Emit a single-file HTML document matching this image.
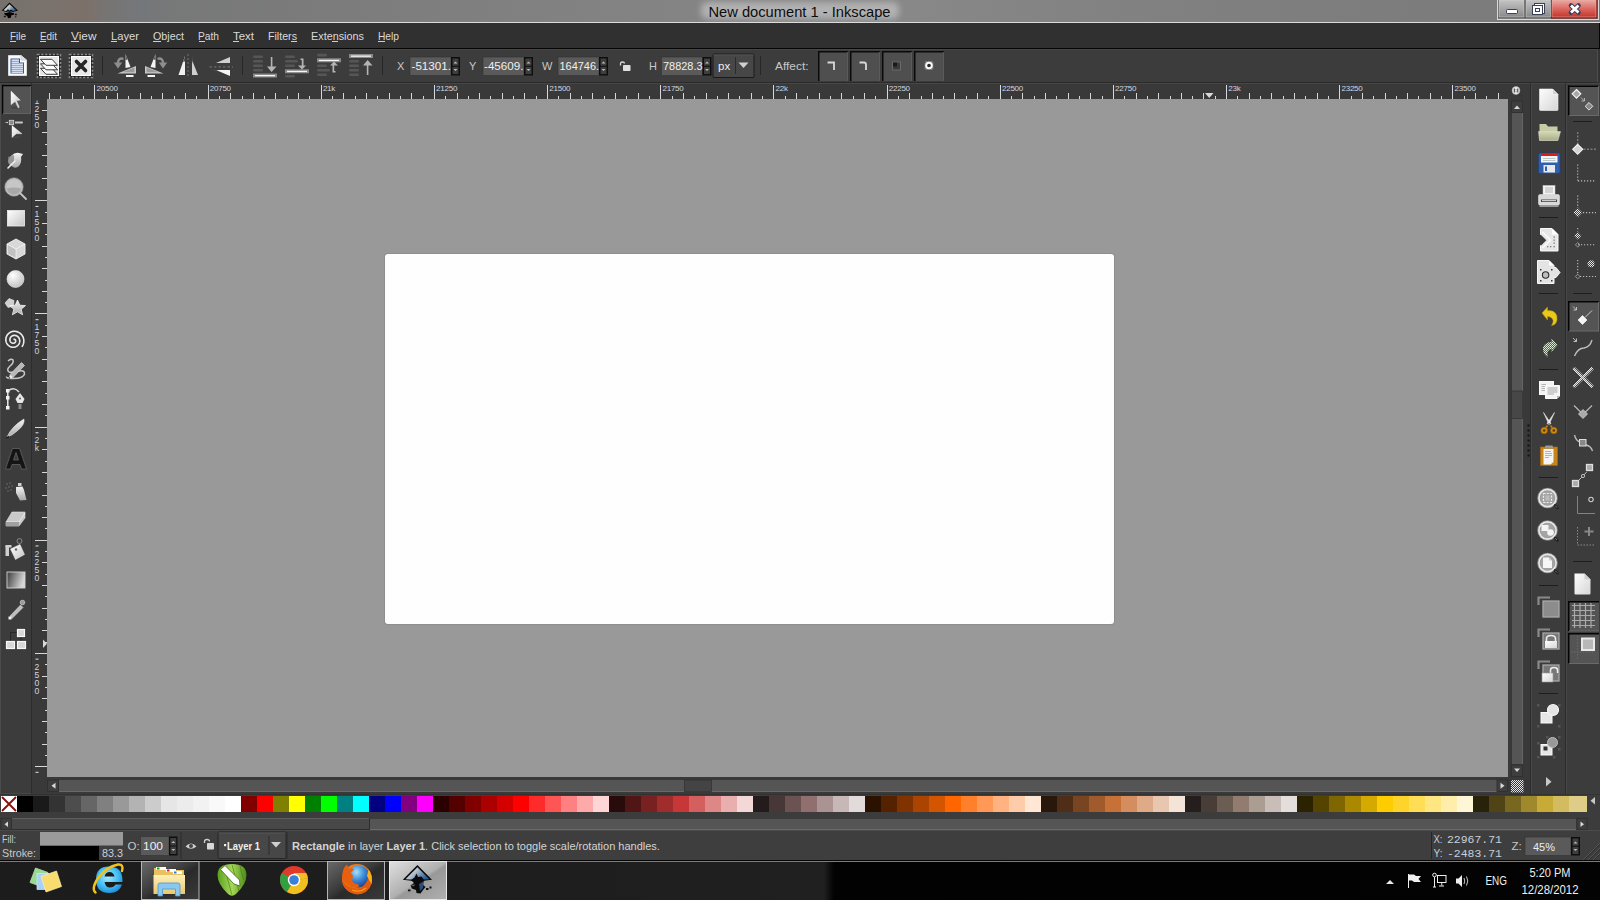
<!DOCTYPE html>
<html><head><meta charset="utf-8">
<style>
*{margin:0;padding:0;box-sizing:border-box}
html,body{width:1600px;height:900px;overflow:hidden;background:#3a3a3a;font-family:"Liberation Sans",sans-serif}
.a{position:absolute}
svg{position:absolute;left:0;top:0}
svg text{font-family:"Liberation Sans",sans-serif}
</style></head><body>
<div class="a" style="left:0;top:0;width:1600px;height:22px;background:linear-gradient(90deg,#77716c 0px,#7a736d 50px,#7c7169 85px,#767574 110px,#74777b 140px,#777878 170px,#7b7b7b 300px,#808080 500px,#848484 690px,#888888 910px,#828282 1100px,#7e7e7e 1300px,#7a7a7a 1600px)"></div>
<div class="a" style="left:0;top:0;width:1600px;height:22px;overflow:hidden"><div class="a" style="left:701px;top:2px;width:198px;height:17px;background:#b2b2b2;border-radius:6px;filter:blur(3px)"></div></div>
<div class="a" style="left:0;top:22px;width:1600px;height:1px;background:#dcdcdc"></div>
<div class="a" style="left:0;top:23px;width:1600px;height:25px;background:#303030"></div>
<div class="a" style="left:0;top:48px;width:1600px;height:1px;background:#050505"></div>
<div class="a" style="left:0;top:49px;width:1600px;height:33px;background:#3c3c3c;border-top:1px solid #474747"></div>
<div class="a" style="left:0;top:82px;width:1600px;height:1px;background:#2a2a2a"></div>
<div class="a" style="left:0;top:83px;width:1600px;height:712px;background:#3c3c3c;border-top:1px solid #474747"></div>
<div class="a" style="left:31px;top:83px;width:1px;height:712px;background:#2c2c2c"></div>
<div class="a" style="left:32px;top:84px;width:1498px;height:15px;background:#393939"></div>
<div class="a" style="left:32px;top:84px;width:15px;height:711px;background:#393939"></div>
<div class="a" style="left:47px;top:99px;width:1461px;height:678px;background:#999999"></div>
<div class="a" style="left:385px;top:254px;width:729px;height:370px;background:#fefefe;border-radius:3px;box-shadow:0 0 0 1px #8e8e8e"></div>
<div class="a" style="left:1508px;top:99px;width:22px;height:696px;background:#393939"></div>
<div class="a" style="left:47px;top:777px;width:1461px;height:18px;background:#393939"></div>
<div class="a" style="left:1530px;top:83px;width:1px;height:712px;background:#2c2c2c"></div>
<div class="a" style="left:1531px;top:84px;width:1px;height:711px;background:#474747"></div>
<div class="a" style="left:1565px;top:83px;width:1px;height:712px;background:#2c2c2c"></div>
<div class="a" style="left:1566px;top:84px;width:1px;height:711px;background:#474747"></div>
<div class="a" style="left:0;top:795px;width:1600px;height:35px;background:#3c3c3c"></div>
<div class="a" style="left:0;top:830px;width:1600px;height:31px;background:#3e3e3e;border-top:1px solid #4a4a4a"></div>
<div class="a" style="left:0;top:860px;width:1600px;height:1px;background:#050505"></div>
<div class="a" style="left:0;top:861px;width:1600px;height:1px;background:#7c7c7c"></div>
<div class="a" style="left:0;top:862px;width:1600px;height:38px;background:linear-gradient(90deg,#1c1c1c 0px,#1e1e1e 600px,#202020 824px,#020202 834px,#030303 1600px)"></div>
<div class="a" style="left:1599px;top:23px;width:1px;height:25px;background:#050505"></div>
<div class="a" style="left:1597px;top:50px;width:1px;height:32px;background:#4e4e4e"></div>
<div class="a" style="left:1598px;top:49px;width:2px;height:34px;background:#333"></div>
<div class="a" style="left:0;top:84px;width:1px;height:710px;background:#4c4c4c"></div>
<div class="a" style="left:0;top:793px;width:31px;height:1px;background:#484848"></div>
<div class="a" style="left:0;top:794px;width:1600px;height:1px;background:#333"></div>

<svg width="1600" height="900" viewBox="0 0 1600 900">

<g id="title">
<!-- inkscape logo small -->
<defs><linearGradient id="inkg2" x1="0" y1="0" x2="1" y2="0.5"><stop offset="0" stop-color="#ffffff"/><stop offset="0.5" stop-color="#b8c4d0"/><stop offset="1" stop-color="#2a5a98"/></linearGradient></defs>
<path d="M9.5 2.6L18 10.5L9.5 13L1.8 10.5Z" fill="#0a0a0a"/>
<path d="M9.5 4.3L16.2 10.3L9.5 12L3.6 10.3Z" fill="url(#inkg2)"/>
<path d="M6 10.5L8 9.2L9.5 10.5L11 9.5L13 10.8L9.5 12Z" fill="#151515"/>
<path d="M4.2 13L14 13L13.8 14.8L11.3 15.2L10.8 17.8L8 18.2L7.3 16L4.8 14.8Z" fill="#000"/>
<rect x="3.8" y="15.8" width="2" height="1.4" fill="#111"/><rect x="14.8" y="13.8" width="2" height="1.4" fill="#111"/><rect x="15" y="16.2" width="1.3" height="1.2" fill="#222"/>
<text x="708.5" y="17" font-size="15" fill="#0c0c10" textLength="182" lengthAdjust="spacingAndGlyphs">New document 1 - Inkscape</text>
<!-- caption buttons -->
<rect x="1497.5" y="-1" width="101" height="20.5" fill="none" stroke="#d8d8d8" stroke-width="1"/>
<defs>
<linearGradient id="capg" x1="0" y1="0" x2="0" y2="1"><stop offset="0" stop-color="#c4c4c4"/><stop offset="1" stop-color="#8a8a8a"/></linearGradient>
<linearGradient id="capr" x1="0" y1="0" x2="0" y2="1"><stop offset="0" stop-color="#eaaaa6"/><stop offset="0.5" stop-color="#dc6a62"/><stop offset="1" stop-color="#c4362c"/></linearGradient>
</defs>
<rect x="1498" y="0" width="27" height="18" fill="#505050"/>
<rect x="1499" y="0" width="25" height="17" fill="url(#capg)" stroke="#d0d0d0" stroke-width="0.6"/>
<rect x="1525" y="0" width="26" height="18" fill="#505050"/>
<rect x="1526" y="0" width="24.5" height="17" fill="url(#capg)" stroke="#d0d0d0" stroke-width="0.6"/>
<rect x="1551" y="0" width="46.5" height="18.5" fill="#7a1410"/>
<rect x="1552" y="0" width="44" height="17" fill="url(#capr)" stroke="#eeb0a8" stroke-width="0.6"/>
<rect x="1506.5" y="9.5" width="11" height="4" rx="0.8" fill="#fff" stroke="#3a3f58" stroke-width="1"/>
<rect x="1534.5" y="3.5" width="10" height="10" fill="#fff" stroke="#3a3f58" stroke-width="1"/>
<rect x="1532.5" y="5.5" width="10" height="9" fill="#fff" stroke="#3a3f58" stroke-width="1"/>
<rect x="1535" y="8" width="5" height="4" fill="#3a3f58"/><rect x="1536" y="9" width="3" height="2" fill="#fff"/>
<path d="M1571 5.5L1578.5 12.5M1578.5 5.5L1571 12.5" stroke="#3a3f58" stroke-width="4.6" stroke-linecap="round"/>
<path d="M1571 5.5L1578.5 12.5M1578.5 5.5L1571 12.5" stroke="#fff" stroke-width="2.8" stroke-linecap="butt"/>
</g>

<g font-size="11" fill="#dadada">
<text x="10" y="40" textLength="16" lengthAdjust="spacingAndGlyphs">File</text>
<text x="40" y="40" textLength="17" lengthAdjust="spacingAndGlyphs">Edit</text>
<text x="71" y="40" textLength="25.5" lengthAdjust="spacingAndGlyphs">View</text>
<text x="111" y="40" textLength="28" lengthAdjust="spacingAndGlyphs">Layer</text>
<text x="153" y="40" textLength="31" lengthAdjust="spacingAndGlyphs">Object</text>
<text x="198" y="40" textLength="21" lengthAdjust="spacingAndGlyphs">Path</text>
<text x="233" y="40" textLength="21" lengthAdjust="spacingAndGlyphs">Text</text>
<text x="268" y="40" textLength="29" lengthAdjust="spacingAndGlyphs">Filters</text>
<text x="311" y="40" textLength="53" lengthAdjust="spacingAndGlyphs">Extensions</text>
<text x="378" y="40" textLength="21" lengthAdjust="spacingAndGlyphs">Help</text>
</g>
<g fill="#cfcfcf">
<rect x="10" y="41" width="6" height="1"/><rect x="40" y="41" width="6" height="1"/><rect x="71" y="41" width="8" height="1"/>
<rect x="111" y="41" width="6" height="1"/><rect x="153" y="41" width="8" height="1"/><rect x="199" y="41" width="6" height="1"/>
<rect x="233" y="41" width="6" height="1"/><rect x="291" y="41" width="6" height="1"/><rect x="332" y="41" width="6" height="1"/>
<rect x="378" y="41" width="7" height="1"/>
</g>

<g id="toolbar">
<!-- select all -->
<path d="M8.5 55.5H21L26.5 60V75.5H8.5Z" fill="#fbfbfb" stroke="#d8d8d8" stroke-width="1" stroke-linejoin="round"/>
<path d="M21 55.5V60H26.5" fill="#e0e0dc" stroke="#c8c8c4" stroke-width="0.8"/>
<rect x="10.5" y="58.5" width="9.5" height="15" fill="#2c5aa8"/><rect x="20" y="62.5" width="4" height="11" fill="#2c5aa8"/>
<g fill="#fff"><rect x="11.5" y="59.5" width="7.5" height="1.3"/><rect x="11.5" y="61.5" width="7.5" height="1.3"/><rect x="11.5" y="63.5" width="11.5" height="1.3"/><rect x="11.5" y="65.5" width="11.5" height="1.3"/><rect x="11.5" y="67.5" width="11.5" height="1.3"/><rect x="11.5" y="69.5" width="11.5" height="1.3"/><rect x="11.5" y="71.5" width="11.5" height="1.3"/></g>
<!-- select all in all layers -->
<rect x="37.5" y="54.5" width="23" height="23" fill="#1e1e1e"/>
<rect x="37.5" y="54.5" width="23" height="23" fill="none" stroke="#8a8a8a" stroke-width="1.6" stroke-dasharray="2.2 1.6"/>
<rect x="39" y="56" width="20" height="20" fill="#fff"/>
<rect x="40" y="57" width="18" height="18" fill="#e6e6e6"/>
<g fill="#fafafa" stroke="#3a3a3a" stroke-width="1" stroke-linejoin="round">
<path d="M40.5 68.3H52L57.5 74.3H46Z"/><path d="M40.5 63.8H52L57.5 69.8H46Z"/><path d="M40.5 59.3H52L57.5 65.3H46Z"/>
</g>
<!-- deselect -->
<rect x="69.5" y="54.5" width="23" height="23" fill="#1e1e1e"/>
<rect x="69.5" y="54.5" width="23" height="23" fill="none" stroke="#8a8a8a" stroke-width="1.6" stroke-dasharray="2.2 1.6"/>
<rect x="71" y="56" width="20" height="20" fill="#fff"/>
<rect x="72" y="57" width="18" height="18" fill="#e8e8e8"/>
<path d="M76.5 61.5L85.5 70.5M85.5 61.5L76.5 70.5" stroke="#262626" stroke-width="3.6" stroke-linecap="round"/>
<!-- separators -->
<g fill="#262626"><rect x="102" y="56" width="1" height="19"/><rect x="242" y="56" width="1" height="19"/><rect x="382" y="56" width="1" height="19"/><rect x="760" y="56" width="1" height="19"/></g>
<!-- rotate ccw -->
<g>
<path d="M123.5 58.8Q118 57.5 118 63" fill="none" stroke="#8e8e8e" stroke-width="2.4"/><path d="M113.8 62.5H122.2L118 68.5Z" fill="#8e8e8e"/>
<path d="M125.5 54L130.5 67L125.5 68Z" fill="#f4f4f4"/><path d="M125.5 54L127.6 59.5L125.5 60Z" fill="#555"/>
<path d="M117.5 73.5L136 66V73.5Z" fill="#c8c8c8"/><path d="M122.5 72.2L134.5 67.5V72.2Z" fill="#999"/>
<rect x="126" y="75" width="7.5" height="2" fill="#f4f4f4"/>
</g>
<g transform="translate(281,0) scale(-1,1)">
<path d="M123.5 58.8Q118 57.5 118 63" fill="none" stroke="#8e8e8e" stroke-width="2.4"/><path d="M113.8 62.5H122.2L118 68.5Z" fill="#8e8e8e"/>
<path d="M125.5 54L130.5 67L125.5 68Z" fill="#f4f4f4"/><path d="M125.5 54L127.6 59.5L125.5 60Z" fill="#555"/>
<path d="M117.5 73.5L136 66V73.5Z" fill="#c8c8c8"/><path d="M122.5 72.2L134.5 67.5V72.2Z" fill="#999"/>
<rect x="126" y="75" width="7.5" height="2" fill="#f4f4f4"/>
</g>
<!-- flip h -->
<path d="M178.5 75L185 56V75Z" fill="#f2f2f2"/><path d="M183 62L185 56V61.5Z" fill="#555"/>
<path d="M192 60V75H198Z" fill="#cfcfcf"/><path d="M192 56V60.5L193.5 64.5Z" fill="#555"/>
<path d="M188 54V77" stroke="#6a6a6a" stroke-width="1.2" stroke-dasharray="2 2"/>
<!-- flip v -->
<path d="M216 63L230 57V63Z" fill="#cfcfcf"/>
<path d="M216 70H230V76Z" fill="#f4f4f4"/><path d="M210.5 69.5L216 70L219 71.5Z" fill="#555"/>
<path d="M209.5 66.8H233" stroke="#6a6a6a" stroke-width="1.2" stroke-dasharray="2.5 2"/>
<!-- lower to bottom -->
<g fill="#565656"><rect x="253" y="55.5" width="10" height="2.6" rx="1.3"/><rect x="253" y="60" width="10" height="2.6" rx="1.3"/><rect x="253" y="64.5" width="10" height="2.6" rx="1.3"/><rect x="253" y="69" width="10" height="2.6" rx="1.3"/>
<rect x="285" y="55.5" width="10" height="2.6" rx="1.3"/><rect x="285" y="60" width="13" height="2.6" rx="1.3"/><rect x="285" y="64.5" width="10" height="2.6" rx="1.3"/><rect x="285" y="75" width="10" height="2.6" rx="1.3"/>
<rect x="317" y="53.8" width="10" height="2.6" rx="1.3"/><rect x="317" y="64.5" width="10" height="2.6" rx="1.3"/><rect x="317" y="69" width="13" height="2.6" rx="1.3"/><rect x="317" y="73.5" width="10" height="2.6" rx="1.3"/>
<rect x="349" y="60" width="10" height="2.6" rx="1.3"/><rect x="349" y="64.5" width="10" height="2.6" rx="1.3"/><rect x="349" y="69" width="10" height="2.6" rx="1.3"/><rect x="349" y="73.5" width="10" height="2.6" rx="1.3"/></g>
<g fill="#8a8a8a"><rect x="253" y="73.5" width="24" height="4"/><rect x="285" y="69.3" width="24" height="4"/><rect x="317" y="58.3" width="24" height="4"/><rect x="349" y="54" width="24" height="4"/></g>
<g fill="#f6f6f6"><rect x="255" y="75" width="20" height="1.3"/><rect x="287" y="70.8" width="20" height="1.3"/><rect x="319" y="59.8" width="20" height="1.3"/><rect x="351" y="55.5" width="20" height="1.3"/></g>
<g fill="#b4b4b4">
<rect x="270.8" y="57" width="1.6" height="10"/><path d="M267 66.5H276.5L271.6 72Z"/>
<path d="M300.5 58.5H303.5V65.5H306L302 69.5L298 65.5H301.8V60H300.5Z"/>
<path d="M335.5 72.5H332.5V65.5H330L334 61.5L338 65.5H334.2V71H335.5Z"/>
<rect x="366.8" y="64" width="1.6" height="11"/><path d="M363 65.5H372.5L367.6 60Z"/>
</g>
<!-- X Y W H -->
<g font-size="11" fill="#c8c8c8">
<text x="397" y="70">X</text><text x="469" y="70">Y</text><text x="542" y="70">W</text><text x="649" y="70">H</text>
<text x="775" y="70" textLength="33.5" lengthAdjust="spacingAndGlyphs">Affect:</text>
</g>
<g>
<rect x="410" y="57" width="41" height="18.5" fill="#5a5a5a" stroke="#333" stroke-width="0.6"/>
<rect x="483" y="57" width="41" height="18.5" fill="#5a5a5a" stroke="#333" stroke-width="0.6"/>
<rect x="558" y="57" width="41" height="18.5" fill="#5a5a5a" stroke="#333" stroke-width="0.6"/>
<rect x="661.5" y="57" width="41" height="18.5" fill="#5a5a5a" stroke="#333" stroke-width="0.6"/>
</g>
<g fill="#0e0e0e"><rect x="451" y="57" width="9" height="18.5"/><rect x="524" y="57" width="9" height="18.5"/><rect x="599" y="57" width="9" height="18.5"/><rect x="702.5" y="57" width="9" height="18.5"/></g>
<g fill="#3e3e3e"><rect x="452.5" y="58.5" width="6" height="7.3"/><rect x="452.5" y="66.8" width="6" height="7.3"/>
<rect x="525.5" y="58.5" width="6" height="7.3"/><rect x="525.5" y="66.8" width="6" height="7.3"/>
<rect x="600.5" y="58.5" width="6" height="7.3"/><rect x="600.5" y="66.8" width="6" height="7.3"/>
<rect x="704" y="58.5" width="6" height="7.3"/><rect x="704" y="66.8" width="6" height="7.3"/></g>
<g fill="#bbb">
<path d="M453.5 63.5H457.5L455.5 61.5Z"/><path d="M453.5 69H457.5L455.5 71Z"/>
<path d="M526.5 63.5H530.5L528.5 61.5Z"/><path d="M526.5 69H530.5L528.5 71Z"/>
<path d="M601.5 63.5H605.5L603.5 61.5Z"/><path d="M601.5 69H605.5L603.5 71Z"/>
<path d="M705 63.5H709L707 61.5Z"/><path d="M705 69H709L707 71Z"/>
</g>
<g font-size="11.5" fill="#f0f0f0">
<text x="411.5" y="69.6" textLength="39.5" lengthAdjust="spacingAndGlyphs">-51301.</text>
<text x="484" y="69.6" textLength="39.5" lengthAdjust="spacingAndGlyphs">-45609.</text>
<text x="559.5" y="69.6" textLength="39.5" lengthAdjust="spacingAndGlyphs">164746.</text>
<text x="663" y="69.6" textLength="39.5" lengthAdjust="spacingAndGlyphs">78828.3</text>
</g>
<!-- lock -->
<path d="M620.5 65.5V63.5C620.5 61.5 624.5 61.5 624.5 63.5" fill="none" stroke="#d8d8d8" stroke-width="1.3"/>
<rect x="623" y="65" width="7.5" height="6" rx="0.8" fill="#e0e0e0"/>
<!-- px combo -->
<rect x="713" y="54" width="41" height="23.5" rx="1" fill="#474747" stroke="#1a1a1a" stroke-width="1"/>
<rect x="713.5" y="54.5" width="40" height="1" fill="#555"/>
<text x="718" y="69.8" font-size="11.5" fill="#f0f0f0">px</text>
<rect x="735" y="57" width="1" height="17" fill="#2c2c2c"/>
<path d="M738.5 62.5H748.5L743.5 68Z" fill="#d0d0d0"/>
<!-- affect buttons -->
<g>
<rect x="818" y="51" width="30" height="30" fill="#4f4f4f"/><rect x="818" y="51" width="30" height="1.5" fill="#0a0a0a"/><rect x="818" y="51" width="1.5" height="30" fill="#0a0a0a"/>
<rect x="850" y="51" width="30" height="30" fill="#4f4f4f"/><rect x="850" y="51" width="30" height="1.5" fill="#0a0a0a"/><rect x="850" y="51" width="1.5" height="30" fill="#0a0a0a"/>
<rect x="882" y="51" width="30" height="30" fill="#4f4f4f"/><rect x="882" y="51" width="30" height="1.5" fill="#0a0a0a"/><rect x="882" y="51" width="1.5" height="30" fill="#0a0a0a"/>
<rect x="914" y="51" width="30" height="30" fill="#4f4f4f"/><rect x="914" y="51" width="30" height="1.5" fill="#0a0a0a"/><rect x="914" y="51" width="1.5" height="30" fill="#0a0a0a"/>
</g>
<g fill="#5a5a5a"><rect x="847" y="52" width="1" height="29"/><rect x="879" y="52" width="1" height="29"/><rect x="911" y="52" width="1" height="29"/><rect x="943" y="52" width="1" height="29"/></g>
<path d="M827.5 62.5H834V70" fill="none" stroke="#d8d8d8" stroke-width="1.8"/>
<path d="M859.5 62.5H864Q866 62.5 866 64.5V70" fill="none" stroke="#d8d8d8" stroke-width="1.8"/>
<rect x="892" y="61.5" width="9" height="9" fill="#6a6a6a"/><rect x="893" y="62.5" width="7" height="7" fill="#3a3a3a"/><rect x="893" y="62.5" width="4" height="4" fill="#1a1a1a"/>
<rect x="924.5" y="61" width="9" height="9" rx="2" fill="#777"/>
<circle cx="929" cy="65.5" r="3.8" fill="#fafafa"/><circle cx="929" cy="65.5" r="1.8" fill="#2a2a2a"/>
</g>

<g stroke="#d8d8d8" stroke-width="1"><line x1="49.5" y1="93" x2="49.5" y2="99"/><line x1="60.5" y1="96" x2="60.5" y2="99"/><line x1="72.5" y1="93" x2="72.5" y2="99"/><line x1="83.5" y1="96" x2="83.5" y2="99"/><line x1="94.5" y1="85" x2="94.5" y2="99"/><line x1="106.5" y1="96" x2="106.5" y2="99"/><line x1="117.5" y1="93" x2="117.5" y2="99"/><line x1="128.5" y1="96" x2="128.5" y2="99"/><line x1="140.5" y1="93" x2="140.5" y2="99"/><line x1="151.5" y1="96" x2="151.5" y2="99"/><line x1="162.5" y1="93" x2="162.5" y2="99"/><line x1="174.5" y1="96" x2="174.5" y2="99"/><line x1="185.5" y1="93" x2="185.5" y2="99"/><line x1="196.5" y1="96" x2="196.5" y2="99"/><line x1="208.5" y1="85" x2="208.5" y2="99"/><line x1="219.5" y1="96" x2="219.5" y2="99"/><line x1="230.5" y1="93" x2="230.5" y2="99"/><line x1="242.5" y1="96" x2="242.5" y2="99"/><line x1="253.5" y1="93" x2="253.5" y2="99"/><line x1="264.5" y1="96" x2="264.5" y2="99"/><line x1="275.5" y1="93" x2="275.5" y2="99"/><line x1="287.5" y1="96" x2="287.5" y2="99"/><line x1="298.5" y1="93" x2="298.5" y2="99"/><line x1="309.5" y1="96" x2="309.5" y2="99"/><line x1="321.5" y1="85" x2="321.5" y2="99"/><line x1="332.5" y1="96" x2="332.5" y2="99"/><line x1="343.5" y1="93" x2="343.5" y2="99"/><line x1="355.5" y1="96" x2="355.5" y2="99"/><line x1="366.5" y1="93" x2="366.5" y2="99"/><line x1="377.5" y1="96" x2="377.5" y2="99"/><line x1="389.5" y1="93" x2="389.5" y2="99"/><line x1="400.5" y1="96" x2="400.5" y2="99"/><line x1="411.5" y1="93" x2="411.5" y2="99"/><line x1="423.5" y1="96" x2="423.5" y2="99"/><line x1="434.5" y1="85" x2="434.5" y2="99"/><line x1="445.5" y1="96" x2="445.5" y2="99"/><line x1="457.5" y1="93" x2="457.5" y2="99"/><line x1="468.5" y1="96" x2="468.5" y2="99"/><line x1="479.5" y1="93" x2="479.5" y2="99"/><line x1="490.5" y1="96" x2="490.5" y2="99"/><line x1="502.5" y1="93" x2="502.5" y2="99"/><line x1="513.5" y1="96" x2="513.5" y2="99"/><line x1="524.5" y1="93" x2="524.5" y2="99"/><line x1="536.5" y1="96" x2="536.5" y2="99"/><line x1="547.5" y1="85" x2="547.5" y2="99"/><line x1="558.5" y1="96" x2="558.5" y2="99"/><line x1="570.5" y1="93" x2="570.5" y2="99"/><line x1="581.5" y1="96" x2="581.5" y2="99"/><line x1="592.5" y1="93" x2="592.5" y2="99"/><line x1="604.5" y1="96" x2="604.5" y2="99"/><line x1="615.5" y1="93" x2="615.5" y2="99"/><line x1="626.5" y1="96" x2="626.5" y2="99"/><line x1="638.5" y1="93" x2="638.5" y2="99"/><line x1="649.5" y1="96" x2="649.5" y2="99"/><line x1="660.5" y1="85" x2="660.5" y2="99"/><line x1="672.5" y1="96" x2="672.5" y2="99"/><line x1="683.5" y1="93" x2="683.5" y2="99"/><line x1="694.5" y1="96" x2="694.5" y2="99"/><line x1="706.5" y1="93" x2="706.5" y2="99"/><line x1="717.5" y1="96" x2="717.5" y2="99"/><line x1="728.5" y1="93" x2="728.5" y2="99"/><line x1="739.5" y1="96" x2="739.5" y2="99"/><line x1="751.5" y1="93" x2="751.5" y2="99"/><line x1="762.5" y1="96" x2="762.5" y2="99"/><line x1="773.5" y1="85" x2="773.5" y2="99"/><line x1="785.5" y1="96" x2="785.5" y2="99"/><line x1="796.5" y1="93" x2="796.5" y2="99"/><line x1="807.5" y1="96" x2="807.5" y2="99"/><line x1="819.5" y1="93" x2="819.5" y2="99"/><line x1="830.5" y1="96" x2="830.5" y2="99"/><line x1="841.5" y1="93" x2="841.5" y2="99"/><line x1="853.5" y1="96" x2="853.5" y2="99"/><line x1="864.5" y1="93" x2="864.5" y2="99"/><line x1="875.5" y1="96" x2="875.5" y2="99"/><line x1="887.5" y1="85" x2="887.5" y2="99"/><line x1="898.5" y1="96" x2="898.5" y2="99"/><line x1="909.5" y1="93" x2="909.5" y2="99"/><line x1="921.5" y1="96" x2="921.5" y2="99"/><line x1="932.5" y1="93" x2="932.5" y2="99"/><line x1="943.5" y1="96" x2="943.5" y2="99"/><line x1="954.5" y1="93" x2="954.5" y2="99"/><line x1="966.5" y1="96" x2="966.5" y2="99"/><line x1="977.5" y1="93" x2="977.5" y2="99"/><line x1="988.5" y1="96" x2="988.5" y2="99"/><line x1="1000.5" y1="85" x2="1000.5" y2="99"/><line x1="1011.5" y1="96" x2="1011.5" y2="99"/><line x1="1022.5" y1="93" x2="1022.5" y2="99"/><line x1="1034.5" y1="96" x2="1034.5" y2="99"/><line x1="1045.5" y1="93" x2="1045.5" y2="99"/><line x1="1056.5" y1="96" x2="1056.5" y2="99"/><line x1="1068.5" y1="93" x2="1068.5" y2="99"/><line x1="1079.5" y1="96" x2="1079.5" y2="99"/><line x1="1090.5" y1="93" x2="1090.5" y2="99"/><line x1="1102.5" y1="96" x2="1102.5" y2="99"/><line x1="1113.5" y1="85" x2="1113.5" y2="99"/><line x1="1124.5" y1="96" x2="1124.5" y2="99"/><line x1="1136.5" y1="93" x2="1136.5" y2="99"/><line x1="1147.5" y1="96" x2="1147.5" y2="99"/><line x1="1158.5" y1="93" x2="1158.5" y2="99"/><line x1="1170.5" y1="96" x2="1170.5" y2="99"/><line x1="1181.5" y1="93" x2="1181.5" y2="99"/><line x1="1192.5" y1="96" x2="1192.5" y2="99"/><line x1="1203.5" y1="93" x2="1203.5" y2="99"/><line x1="1215.5" y1="96" x2="1215.5" y2="99"/><line x1="1226.5" y1="85" x2="1226.5" y2="99"/><line x1="1237.5" y1="96" x2="1237.5" y2="99"/><line x1="1249.5" y1="93" x2="1249.5" y2="99"/><line x1="1260.5" y1="96" x2="1260.5" y2="99"/><line x1="1271.5" y1="93" x2="1271.5" y2="99"/><line x1="1283.5" y1="96" x2="1283.5" y2="99"/><line x1="1294.5" y1="93" x2="1294.5" y2="99"/><line x1="1305.5" y1="96" x2="1305.5" y2="99"/><line x1="1317.5" y1="93" x2="1317.5" y2="99"/><line x1="1328.5" y1="96" x2="1328.5" y2="99"/><line x1="1339.5" y1="85" x2="1339.5" y2="99"/><line x1="1351.5" y1="96" x2="1351.5" y2="99"/><line x1="1362.5" y1="93" x2="1362.5" y2="99"/><line x1="1373.5" y1="96" x2="1373.5" y2="99"/><line x1="1385.5" y1="93" x2="1385.5" y2="99"/><line x1="1396.5" y1="96" x2="1396.5" y2="99"/><line x1="1407.5" y1="93" x2="1407.5" y2="99"/><line x1="1418.5" y1="96" x2="1418.5" y2="99"/><line x1="1430.5" y1="93" x2="1430.5" y2="99"/><line x1="1441.5" y1="96" x2="1441.5" y2="99"/><line x1="1452.5" y1="85" x2="1452.5" y2="99"/><line x1="1464.5" y1="96" x2="1464.5" y2="99"/><line x1="1475.5" y1="93" x2="1475.5" y2="99"/><line x1="1486.5" y1="96" x2="1486.5" y2="99"/><line x1="1498.5" y1="93" x2="1498.5" y2="99"/></g><g fill="#cfd6e0" font-size="8" letter-spacing="-0.25"><text x="96.6" y="91">20500</text><text x="209.8" y="91">20750</text><text x="322.9" y="91">21k</text><text x="436.1" y="91">21250</text><text x="549.3" y="91">21500</text><text x="662.5" y="91">21750</text><text x="775.6" y="91">22k</text><text x="888.8" y="91">22250</text><text x="1002.0" y="91">22500</text><text x="1115.1" y="91">22750</text><text x="1228.3" y="91">23k</text><text x="1341.5" y="91">23250</text><text x="1454.6" y="91">23500</text></g>
<defs><clipPath id="vrc"><rect x="32" y="100.5" width="15" height="675"/></clipPath></defs><g stroke="#d8d8d8" stroke-width="1"><line x1="42" y1="110.5" x2="47" y2="110.5"/><line x1="45" y1="121.5" x2="47" y2="121.5"/><line x1="42" y1="132.5" x2="47" y2="132.5"/><line x1="45" y1="144.5" x2="47" y2="144.5"/><line x1="42" y1="155.5" x2="47" y2="155.5"/><line x1="45" y1="166.5" x2="47" y2="166.5"/><line x1="42" y1="178.5" x2="47" y2="178.5"/><line x1="45" y1="189.5" x2="47" y2="189.5"/><line x1="35" y1="200.5" x2="47" y2="200.5"/><line x1="45" y1="212.5" x2="47" y2="212.5"/><line x1="42" y1="223.5" x2="47" y2="223.5"/><line x1="45" y1="234.5" x2="47" y2="234.5"/><line x1="42" y1="246.5" x2="47" y2="246.5"/><line x1="45" y1="257.5" x2="47" y2="257.5"/><line x1="42" y1="268.5" x2="47" y2="268.5"/><line x1="45" y1="280.5" x2="47" y2="280.5"/><line x1="42" y1="291.5" x2="47" y2="291.5"/><line x1="45" y1="302.5" x2="47" y2="302.5"/><line x1="35" y1="313.5" x2="47" y2="313.5"/><line x1="45" y1="325.5" x2="47" y2="325.5"/><line x1="42" y1="336.5" x2="47" y2="336.5"/><line x1="45" y1="347.5" x2="47" y2="347.5"/><line x1="42" y1="359.5" x2="47" y2="359.5"/><line x1="45" y1="370.5" x2="47" y2="370.5"/><line x1="42" y1="381.5" x2="47" y2="381.5"/><line x1="45" y1="393.5" x2="47" y2="393.5"/><line x1="42" y1="404.5" x2="47" y2="404.5"/><line x1="45" y1="415.5" x2="47" y2="415.5"/><line x1="35" y1="427.5" x2="47" y2="427.5"/><line x1="45" y1="438.5" x2="47" y2="438.5"/><line x1="42" y1="449.5" x2="47" y2="449.5"/><line x1="45" y1="461.5" x2="47" y2="461.5"/><line x1="42" y1="472.5" x2="47" y2="472.5"/><line x1="45" y1="483.5" x2="47" y2="483.5"/><line x1="42" y1="495.5" x2="47" y2="495.5"/><line x1="45" y1="506.5" x2="47" y2="506.5"/><line x1="42" y1="517.5" x2="47" y2="517.5"/><line x1="45" y1="528.5" x2="47" y2="528.5"/><line x1="35" y1="540.5" x2="47" y2="540.5"/><line x1="45" y1="551.5" x2="47" y2="551.5"/><line x1="42" y1="562.5" x2="47" y2="562.5"/><line x1="45" y1="574.5" x2="47" y2="574.5"/><line x1="42" y1="585.5" x2="47" y2="585.5"/><line x1="45" y1="596.5" x2="47" y2="596.5"/><line x1="42" y1="608.5" x2="47" y2="608.5"/><line x1="45" y1="619.5" x2="47" y2="619.5"/><line x1="42" y1="630.5" x2="47" y2="630.5"/><line x1="45" y1="642.5" x2="47" y2="642.5"/><line x1="35" y1="653.5" x2="47" y2="653.5"/><line x1="45" y1="664.5" x2="47" y2="664.5"/><line x1="42" y1="676.5" x2="47" y2="676.5"/><line x1="45" y1="687.5" x2="47" y2="687.5"/><line x1="42" y1="698.5" x2="47" y2="698.5"/><line x1="45" y1="710.5" x2="47" y2="710.5"/><line x1="42" y1="721.5" x2="47" y2="721.5"/><line x1="45" y1="732.5" x2="47" y2="732.5"/><line x1="42" y1="744.5" x2="47" y2="744.5"/><line x1="45" y1="755.5" x2="47" y2="755.5"/><line x1="35" y1="766.5" x2="47" y2="766.5"/></g><g fill="#cfd6e0" font-size="8.6" clip-path="url(#vrc)"><rect x="35.5" y="92.7" width="3" height="1.1"/><text x="37" y="103.8" text-anchor="middle">1</text><text x="37" y="111.9" text-anchor="middle">2</text><text x="37" y="119.9" text-anchor="middle">5</text><text x="37" y="127.9" text-anchor="middle">0</text><rect x="35.5" y="205.9" width="3" height="1.1"/><text x="37" y="217.0" text-anchor="middle">1</text><text x="37" y="225.0" text-anchor="middle">5</text><text x="37" y="233.1" text-anchor="middle">0</text><text x="37" y="241.1" text-anchor="middle">0</text><rect x="35.5" y="319.1" width="3" height="1.1"/><text x="37" y="330.2" text-anchor="middle">1</text><text x="37" y="338.2" text-anchor="middle">7</text><text x="37" y="346.2" text-anchor="middle">5</text><text x="37" y="354.3" text-anchor="middle">0</text><rect x="35.5" y="432.2" width="3" height="1.1"/><text x="37" y="443.3" text-anchor="middle">2</text><text x="37" y="451.4" text-anchor="middle">k</text><rect x="35.5" y="545.4" width="3" height="1.1"/><text x="37" y="556.5" text-anchor="middle">2</text><text x="37" y="564.5" text-anchor="middle">2</text><text x="37" y="572.6" text-anchor="middle">5</text><text x="37" y="580.6" text-anchor="middle">0</text><rect x="35.5" y="658.6" width="3" height="1.1"/><text x="37" y="669.7" text-anchor="middle">2</text><text x="37" y="677.7" text-anchor="middle">5</text><text x="37" y="685.7" text-anchor="middle">0</text><text x="37" y="693.8" text-anchor="middle">0</text><rect x="35.5" y="771.8" width="3" height="1.1"/><text x="37" y="782.9" text-anchor="middle">2</text><text x="37" y="790.9" text-anchor="middle">7</text><text x="37" y="798.9" text-anchor="middle">5</text><text x="37" y="806.9" text-anchor="middle">0</text></g>
<defs>
<linearGradient id="gw" x1="0" y1="0" x2="1" y2="1"><stop offset="0" stop-color="#ffffff"/><stop offset="1" stop-color="#c4c4c4"/></linearGradient>
<linearGradient id="gw2" x1="0" y1="0" x2="0" y2="1"><stop offset="0" stop-color="#f4f4f4"/><stop offset="1" stop-color="#a8a8a8"/></linearGradient>
<linearGradient id="ggrad" x1="0" y1="0" x2="1" y2="0.3"><stop offset="0" stop-color="#3a3a3a"/><stop offset="1" stop-color="#d8d8d8"/></linearGradient>
<radialGradient id="gball" cx="0.35" cy="0.3" r="0.8"><stop offset="0" stop-color="#ffffff"/><stop offset="1" stop-color="#bdbdbd"/></radialGradient>
</defs>
<g id="toolbox">
<!-- selected button -->
<rect x="2" y="85" width="29" height="29" fill="#535353"/>
<rect x="2" y="85" width="29" height="1.3" fill="#050505"/><rect x="2" y="85" width="1.3" height="29" fill="#050505"/>
<rect x="30" y="86" width="1" height="28" fill="#626262"/><rect x="3" y="113" width="28" height="1" fill="#626262"/>
<!-- select arrow -->
<ellipse cx="16" cy="107.5" rx="5" ry="1.5" fill="#474747"/>
<path d="M11 91L20.3 100.2L16.4 100.6L19.4 107.3L18.2 108L15.2 101.4L11 104.8Z" fill="url(#gw)" stroke="#e8e8e8" stroke-width="0.4"/>
<!-- node -->
<path d="M4.5 122.5L8 121.7V123.3Z M15 121.6H22.5L23 122.5L22.5 123.4H15Z" fill="#c8c8c8"/>
<rect x="9.3" y="120.3" width="4.4" height="4.4" fill="#8a8a8a" stroke="#d8d8d8" stroke-width="0.8"/>
<ellipse cx="16" cy="137" rx="5" ry="1.3" fill="#444"/>
<path d="M12 125.5L22 133.8L16.3 133.8L12 137.5Z" fill="url(#gw)" stroke="#eee" stroke-width="0.4"/>
<!-- tweak -->
<path d="M11 156Q15 152 19 153L23 154L21 157Q22 162 19 166Q16 169 13 167L9 164Q7 159 11 156Z" fill="url(#gw2)"/>
<path d="M8 157L14 155L14 163L9 164Z" fill="#888" opacity="0.8"/>
<path d="M8 168L15 161" stroke="#eee" stroke-width="1.6" stroke-linecap="round"/>
<!-- zoom -->
<circle cx="14" cy="187" r="8.3" fill="#c6c6c6" stroke="#bdbdbd" stroke-width="2"/>
<path d="M6.8 188.5Q14 186.5 21.2 188.5A7.3 7.3 0 0 1 6.8 188.5Z" fill="#a8a8a8"/>
<circle cx="14" cy="187" r="9.4" fill="none" stroke="#777" stroke-width="0.6"/>
<path d="M20.5 193.5L26 199" stroke="#c4c4c4" stroke-width="1.8" stroke-linecap="round"/>
<!-- rect -->
<rect x="7.5" y="210.5" width="17" height="15.5" fill="url(#gw)" stroke="#f0f0f0" stroke-width="0.8"/>
<!-- 3d box -->
<path d="M7 244L16 239L25 244V254L16 259L7 254Z" fill="#d8d8d8" stroke="#f2f2f2" stroke-width="0.9"/>
<path d="M7 244L16 249L25 244" fill="none" stroke="#f2f2f2" stroke-width="0.9"/><path d="M16 249V259" stroke="#f2f2f2" stroke-width="0.9"/>
<path d="M8 245L15.5 249.5V257.5L8 253.5Z" fill="#c2c2c2"/>
<!-- circle -->
<circle cx="15.5" cy="279" r="8.5" fill="url(#gball)" stroke="#f2f2f2" stroke-width="0.6"/>
<!-- star -->
<path d="M9 298.5L14 300.5L13.5 306L8 307.5L5 303Z" fill="#cfcfcf" stroke="#eee" stroke-width="0.6"/>
<path d="M17.5 300L19.8 305.2L25.5 305.6L21.2 309.2L22.6 314.8L17.5 311.8L12.4 314.8L13.8 309.2L9.5 305.6L15.2 305.2Z" fill="url(#gw2)" stroke="#f4f4f4" stroke-width="0.8"/>
<!-- spiral -->
<path d="M14.11 339.35 L14.23 339.32 L14.36 339.32 L14.50 339.32 L14.64 339.35 L14.79 339.40 L14.93 339.47 L15.07 339.55 L15.20 339.66 L15.32 339.78 L15.43 339.93 L15.53 340.09 L15.61 340.27 L15.67 340.46 L15.71 340.66 L15.72 340.88 L15.71 341.10 L15.68 341.32 L15.62 341.55 L15.53 341.77 L15.42 341.99 L15.28 342.20 L15.11 342.40 L14.91 342.59 L14.70 342.75 L14.45 342.90 L14.19 343.02 L13.91 343.11 L13.62 343.17 L13.31 343.21 L13.00 343.21 L12.68 343.17 L12.36 343.10 L12.04 342.99 L11.73 342.85 L11.43 342.67 L11.15 342.45 L10.88 342.21 L10.64 341.93 L10.43 341.62 L10.25 341.28 L10.10 340.92 L9.99 340.54 L9.92 340.14 L9.89 339.73 L9.90 339.32 L9.96 338.90 L10.06 338.48 L10.21 338.07 L10.41 337.67 L10.65 337.29 L10.93 336.93 L11.26 336.60 L11.62 336.30 L12.02 336.03 L12.45 335.81 L12.91 335.62 L13.39 335.49 L13.89 335.41 L14.40 335.37 L14.92 335.40 L15.44 335.48 L15.96 335.61 L16.46 335.80 L16.95 336.04 L17.42 336.34 L17.86 336.69 L18.26 337.09 L18.63 337.53 L18.95 338.02 L19.22 338.54 L19.44 339.09 L19.60 339.67 L19.70 340.27 L19.74 340.89 L19.71 341.51 L19.62 342.13 L19.46 342.75 L19.24 343.35 L18.95 343.94 L18.60 344.49 L18.19 345.01 L17.72 345.49 L17.20 345.93 L16.63 346.31 L16.02 346.63 L15.37 346.89 L14.69 347.08 L13.99 347.21 L13.27 347.26 L12.54 347.23 L11.82 347.13 L11.10 346.95 L10.40 346.69 L9.72 346.37 L9.07 345.96 L8.46 345.49 L7.91 344.96 L7.40 344.36 L6.96 343.71 L6.58 343.01 L6.27 342.27 L6.04 341.49 L5.89 340.69 L5.83 339.87 L5.85 339.04 L5.96 338.21 L6.15 337.39 L6.43 336.59 L6.80 335.81 L7.24 335.07 L7.77 334.38 L8.37 333.74 L9.04 333.15 L9.77 332.64 L10.55 332.21 L11.39 331.85 L12.26 331.58 L13.16 331.40 L14.08 331.31 L15.02 331.32 L15.95 331.43 L16.87 331.64 L17.78 331.94 L18.65 332.34 L19.49 332.83 L20.28 333.40 L21.00 334.06 L21.66 334.80 L22.25 335.61 L22.75 336.48 L23.16 337.40 L23.47 338.36 L23.69 339.37 L23.80 340.39 L23.80 341.43 L23.70 342.47 L23.49 343.50 L23.17 344.50 L22.74 345.48 L22.21 346.41" fill="none" stroke="#ececec" stroke-width="1.6" stroke-linecap="round"/>
<!-- pencil -->
<path d="M8 361Q11 358 13 360Q14 363 10 366Q6 370 9 372Q13 373 19 371Q25 370 24.5 374Q23.5 378.5 13 378.5Q6 378.5 6.5 376.5" fill="none" stroke="#c8c8c8" stroke-width="1.5"/>
<path d="M10 374.5L21.5 362.5L24.5 365.5L13 377.5Z" fill="#b8b8b8" stroke="#e8e8e8" stroke-width="0.6"/>
<path d="M10 374.5L8.5 379L13 377.5Z" fill="#eee"/><path d="M9.3 377L8.5 379L10.5 378.3Z" fill="#222"/>
<!-- pen/bezier -->
<rect x="6" y="389" width="3.5" height="3.5" fill="#f2f2f2"/><rect x="6" y="396" width="3.5" height="3.5" fill="#f2f2f2"/><rect x="6" y="406" width="3.5" height="3.5" fill="#f2f2f2"/>
<path d="M7.8 391V408" stroke="#f2f2f2" stroke-width="1.4"/>
<path d="M8 391Q14 386 19 392" fill="none" stroke="#e0e0e0" stroke-width="1.4"/>
<path d="M20 393L24.5 399L22.5 403H17.5L15.5 399Z" fill="#e8e8e8"/><circle cx="20" cy="398.5" r="1" fill="#555"/>
<rect x="18.5" y="404" width="3" height="5" fill="#8a8a8a"/>
<!-- calligraphy -->
<path d="M7 437Q12 426 24 419Q25 425 17 431Q13 435 7 437Z" fill="url(#gw2)" stroke="#eee" stroke-width="0.6"/>
<path d="M5.5 438.5L8.5 435.5L9 437.5Z" fill="#111"/>
<!-- text A -->
<path d="M5.5 469L12.5 448.5H19.5L26.5 469H21.5L20 464.5H12L10.5 469Z M13.5 460H18.5L16 452.5Z" fill="#141414" fill-rule="evenodd" stroke="#6a6a6a" stroke-width="0.7"/>
<!-- spray -->
<g fill="#777"><circle cx="7" cy="484" r="0.7"/><circle cx="10" cy="483" r="0.7"/><circle cx="6" cy="488" r="0.7"/><circle cx="9" cy="487" r="0.7"/><circle cx="12" cy="486" r="0.7"/><circle cx="8" cy="491" r="0.7"/><circle cx="11" cy="490" r="0.7"/></g>
<rect x="18" y="483" width="3.5" height="3" fill="#cfcfcf"/>
<path d="M16 487L22.5 486.5L24 490L26.5 500L20 500.5L16 493Z" fill="url(#gw2)"/>
<!-- eraser -->
<path d="M6 522L12 512H25V518L19 526H6Z" fill="#c9c9c9" stroke="#e6e6e6" stroke-width="0.6"/>
<path d="M6 522H19L25 513" fill="none" stroke="#f4f4f4" stroke-width="0.8"/>
<path d="M6 522H19V526H6Z" fill="#a0a0a0"/>
<!-- paint bucket -->
<rect x="5.5" y="546" width="3.5" height="10" fill="#cfcfcf"/><rect x="5.5" y="545" width="6" height="2.5" fill="#cfcfcf"/>
<path d="M10.5 549L20 544.5L24.5 554.5L15.5 559.5Z" fill="url(#gw)" stroke="#eee" stroke-width="0.5"/>
<circle cx="19.5" cy="541" r="2.5" fill="none" stroke="#999" stroke-width="0.8"/>
<circle cx="16" cy="549.5" r="1.2" fill="#666"/>
<!-- gradient -->
<rect x="7" y="572" width="18" height="16" fill="url(#ggrad)" stroke="#d4d4d4" stroke-width="0.9"/>
<!-- dropper -->
<path d="M10 616L20.5 605L23 607.5L12 618.5Z" fill="#bdbdbd" stroke="#e0e0e0" stroke-width="0.5"/>
<circle cx="22.5" cy="602.5" r="2.3" fill="#9a9a9a" stroke="#d0d0d0" stroke-width="0.7"/>
<rect x="8.5" y="616.5" width="3" height="3" fill="#f0f0f0"/>
<!-- connector -->
<path d="M10.5 645V632.5H17.5M21 633V645" fill="none" stroke="#222" stroke-width="0.8"/>
<rect x="17.5" y="629.5" width="7" height="7" fill="#d8d8d8" stroke="#f8f8f8" stroke-width="1.2"/>
<rect x="6.5" y="641.5" width="8" height="7" fill="#d8d8d8" stroke="#f8f8f8" stroke-width="1.2"/>
<rect x="17.5" y="641.5" width="8" height="7" fill="#d8d8d8" stroke="#f8f8f8" stroke-width="1.2"/>
</g>

<defs>
<linearGradient id="gpage" x1="0" y1="0" x2="1" y2="1"><stop offset="0" stop-color="#fdfdfd"/><stop offset="1" stop-color="#d6d6d6"/></linearGradient>
<linearGradient id="gfold" x1="0" y1="0" x2="0" y2="1"><stop offset="0" stop-color="#d4d8b8"/><stop offset="1" stop-color="#a9ae88"/></linearGradient>
<pattern id="hatch" width="2" height="2" patternUnits="userSpaceOnUse"><rect width="1" height="1" fill="#e8e8e8"/><rect x="1" y="1" width="1" height="1" fill="#e8e8e8"/></pattern>
<pattern id="hatchg" width="2" height="2" patternUnits="userSpaceOnUse"><rect width="2" height="2" fill="#3a7a2a"/><rect width="1" height="1" fill="#e0f0d8"/><rect x="1" y="1" width="1" height="1" fill="#c8e0c0"/></pattern>
</defs>
<g id="right">
<!-- zoom 1:1 icon -->
<circle cx="1516" cy="90.5" r="3.9" fill="#eeeeee" stroke="#aaa" stroke-width="0.6"/>
<path d="M1514.3 88.5V92.5M1517.8 88.5V92.5" stroke="#333" stroke-width="1"/><rect x="1515.6" y="89.3" width="0.9" height="0.9" fill="#444"/><rect x="1515.6" y="91.3" width="0.9" height="0.9" fill="#444"/>
<path d="M1519 94L1522 97" stroke="#2a3a3a" stroke-width="1.2"/>
<!-- vscroll -->
<rect x="1511.5" y="101" width="11.5" height="675" fill="#393939"/>
<rect x="1511.5" y="101" width="11" height="11.5" fill="#3e3e3e" stroke="#2e2e2e" stroke-width="0.8"/>
<path d="M1514 109H1520L1517 105.5Z" fill="#d8d8d8"/>
<rect x="1512" y="113" width="10.5" height="651" fill="#555555"/>
<rect x="1522" y="113" width="1" height="651" fill="#666"/>
<rect x="1511.5" y="391" width="11" height="27.5" fill="#474747" stroke="#333" stroke-width="0.8"/>
<rect x="1511.5" y="765" width="11" height="11.5" fill="#3e3e3e" stroke="#2e2e2e" stroke-width="0.8"/>
<path d="M1514 768.5H1520L1517 772Z" fill="#d8d8d8"/>
<!-- dock handle dots -->
<g fill="#111"><rect x="1527.5" y="424.5" width="2" height="2"/><rect x="1527.5" y="429.5" width="2" height="2"/><rect x="1527.5" y="434.5" width="2" height="2"/><rect x="1527.5" y="439.5" width="2" height="2"/><rect x="1527.5" y="444.5" width="2" height="2"/><rect x="1527.5" y="449.5" width="2" height="2"/><rect x="1527.5" y="454.5" width="2" height="2"/></g>
<!-- hscroll -->
<rect x="47.5" y="780" width="11" height="11.5" fill="#3e3e3e" stroke="#2e2e2e" stroke-width="0.8"/>
<path d="M55.5 782.8V788.8L51.5 785.8Z" fill="#d8d8d8"/>
<rect x="59" y="780" width="1438" height="11.5" fill="#555555"/>
<rect x="59" y="791" width="1438" height="1" fill="#686868"/>
<rect x="684.5" y="780" width="27" height="11.5" fill="#444" stroke="#333" stroke-width="0.8"/>
<rect x="1497" y="780" width="10.5" height="11.5" fill="#3e3e3e" stroke="#2e2e2e" stroke-width="0.8"/>
<path d="M1500.5 782.8V788.8L1504.5 785.8Z" fill="#d8d8d8"/>
<rect x="1511" y="780" width="12.5" height="12.5" fill="url(#hatch)"/>
<!-- markers on rulers -->
<path d="M1205 93H1213.5L1209.25 98Z" fill="#d8d8d8"/>
<path d="M43 639.5V648L47 643.75Z" fill="#d8d8d8"/>

<!-- ===== commands bar ===== -->
<!-- new -->
<path d="M1539.5 89H1552.5L1558 94.5V109.5Q1558 110.5 1557 110.5H1540.5Q1539.5 110.5 1539.5 109.5Z" fill="url(#gpage)" stroke="#f4f4f4" stroke-width="0.6"/>
<path d="M1552.5 89V94.5H1558Z" fill="#cfcfcf" stroke="#fafafa" stroke-width="0.6"/>
<!-- open -->
<path d="M1539.5 124H1546L1548 126.5H1557.5V140.5H1539.5Z" fill="#c8cca6"/>
<path d="M1538.5 131.5H1560.5L1558 140.5H1539.5Z" fill="url(#gfold)" stroke="#dde0c8" stroke-width="0.5"/>
<!-- save -->
<rect x="1538.5" y="153" width="21.5" height="20.5" rx="1.5" fill="#2f5fae" stroke="#1e3c78" stroke-width="0.6"/>
<rect x="1541" y="153.5" width="16.5" height="2.5" fill="#d42020"/>
<rect x="1541" y="156" width="16.5" height="6.5" fill="#f6f6f6"/>
<path d="M1543 158.5H1555.5M1543 160.5H1555.5" stroke="#9aa" stroke-width="0.6"/>
<rect x="1543.5" y="165" width="11.5" height="7.5" fill="#e8e8e8"/><rect x="1545" y="166.5" width="2" height="4.5" fill="#2f5fae"/>
<!-- print -->
<rect x="1543" y="185.5" width="12" height="9" fill="#f4f4f4" stroke="#ccc" stroke-width="0.5"/>
<path d="M1545 188H1553M1545 190H1553M1545 192H1553" stroke="#888" stroke-width="0.6"/>
<rect x="1538.5" y="194.5" width="21" height="10.5" rx="1.5" fill="#d8d8d8" stroke="#eee" stroke-width="0.5"/>
<rect x="1541" y="199.5" width="16" height="2.5" fill="#444"/><rect x="1542" y="200.2" width="14" height="1" fill="#eee"/>
<rect x="1539.5" y="205" width="19" height="2" fill="#999"/>
<!-- separators -->
<g fill="#1e1e1e"><rect x="1539" y="217" width="19" height="1"/><rect x="1539" y="293" width="19" height="1"/><rect x="1539" y="369" width="19" height="1"/><rect x="1539" y="477" width="19" height="1"/><rect x="1539" y="585" width="19" height="1"/><rect x="1539" y="693" width="19" height="1"/>
<rect x="1573" y="121" width="19" height="1"/><rect x="1573" y="293" width="19" height="1"/><rect x="1573" y="561" width="19" height="1"/></g>
<!-- import -->
<path d="M1540.5 228.5H1552L1558 234.5V251H1540.5V245.5L1546 240L1540.5 234.5Z" fill="#e6e6e6" stroke="#fafafa" stroke-width="1"/>
<path d="M1552 228.5V234.5H1558Z" fill="#fff"/>
<path d="M1540.5 235.5L1545.2 240.2L1540.5 245" fill="none" stroke="#3a3a3a" stroke-width="1.6"/>
<path d="M1542.5 232L1550.5 240L1542.5 248" fill="none" stroke="#fafafa" stroke-width="1.6"/>
<g fill="#777"><rect x="1553.5" y="236.5" width="1.3" height="1.3"/><rect x="1553.5" y="239.5" width="1.3" height="1.3"/><rect x="1553.5" y="242.5" width="1.3" height="1.3"/><rect x="1553.5" y="246" width="1.3" height="1.3"/><rect x="1550" y="246" width="1.3" height="1.3"/><rect x="1547" y="246" width="1.3" height="1.3"/></g>
<!-- export -->
<path d="M1537.5 260.5H1549L1554 265.5V267.5H1556L1560 272.5L1556 277.5H1554V283.5H1537.5Z" fill="#e4e4e4" stroke="#f6f6f6" stroke-width="1"/>
<path d="M1549 260.5V265.5H1554Z" fill="#fff"/>
<circle cx="1545.6" cy="275" r="3.2" fill="#bdbdbd" stroke="#2a2a2a" stroke-width="1.1"/>
<g fill="#333"><rect x="1540" y="269" width="1.5" height="1.5"/><rect x="1551" y="269" width="1.5" height="1.5"/><rect x="1540" y="280" width="1.5" height="1.5"/><rect x="1551" y="280" width="1.5" height="1.5"/></g>
<!-- undo -->
<path d="M1542 313L1547.5 307V310.5Q1558 310 1557 320Q1556 325 1551.5 325.5Q1555 320 1551 317.5Q1549 316.5 1547.5 316.5V320Z" fill="#e8c818" stroke="#b89800" stroke-width="0.5"/>
<!-- redo -->
<path d="M1557.5 345L1551.5 338.5V342Q1545 342 1543 347.5Q1542 353 1548 357.5Q1546.5 352 1549 350Q1550 349 1551.5 349V352Z" fill="url(#hatchg)"/>
<!-- copy -->
<rect x="1539.5" y="381.5" width="14" height="13" fill="#f2f2f2" stroke="#fafafa" stroke-width="1"/>
<path d="M1541.5 384.5H1546M1541.5 386.5H1546M1541.5 388.5H1546M1541.5 390.5H1546" stroke="#999" stroke-width="0.7"/>
<path d="M1545.5 385.5H1559.5V396L1557 398.5H1545.5Z" fill="#f4f4f4" stroke="#fafafa" stroke-width="1"/>
<path d="M1557 398.5V396H1559.5Z" fill="#bbb"/>
<path d="M1547.5 388H1557.5M1547.5 390H1557.5M1547.5 392H1557.5M1547.5 394H1554" stroke="#888" stroke-width="0.7"/>
<!-- cut -->
<path d="M1543.5 412.5L1549 424.5L1551 423.5Z" fill="#f0f0f0" stroke="#ddd" stroke-width="0.6"/>
<path d="M1554.5 412.5L1549 424.5L1547 423.5Z" fill="#f0f0f0" stroke="#ddd" stroke-width="0.6"/>
<circle cx="1549" cy="424" r="0.9" fill="#777"/>
<path d="M1547.5 425.5L1545.5 428" stroke="#c88010" stroke-width="1.5"/><path d="M1550.5 425.5L1552.5 428" stroke="#c88010" stroke-width="1.5"/>
<circle cx="1544.2" cy="430.5" r="3.3" fill="#d08a10" stroke="#a06000" stroke-width="0.6"/><circle cx="1544.2" cy="430.5" r="1.3" fill="#5a3a10"/>
<circle cx="1553.8" cy="430.5" r="3.3" fill="#d08a10" stroke="#a06000" stroke-width="0.6"/><circle cx="1553.8" cy="430.5" r="1.3" fill="#5a3a10"/>
<!-- paste -->
<rect x="1540.5" y="447" width="17" height="18.5" fill="#c88418" stroke="#a86a00" stroke-width="0.6"/>
<rect x="1545" y="445.5" width="8" height="3" rx="1" fill="#999"/>
<path d="M1543.5 449H1553.5V462L1550.5 464.5H1543.5Z" fill="#f4f4f4"/>
<path d="M1545 451.5H1551M1545 453.5H1552M1545 455.5H1552M1545 457.5H1549" stroke="#888" stroke-width="0.6"/>
<!-- zoom selection/drawing/page -->
<g>
<circle cx="1547.5" cy="498" r="9.6" fill="#9c9c9c" stroke="#888" stroke-width="1.4"/>
<circle cx="1547.5" cy="498" r="8.6" fill="none" stroke="#e8e8e8" stroke-width="1.6"/>
<circle cx="1547.5" cy="498" r="7" fill="#a4a4a4"/>
<path d="M1555 505.5L1557.5 508" stroke="#222" stroke-width="2.6" stroke-linecap="round"/><path d="M1555.3 505.8L1557 507.5" stroke="#999" stroke-width="0.8"/>
<path d="M1543.5 493.5H1551.5V502.5H1543.5Z" fill="none" stroke="#eeeeee" stroke-width="1.2" stroke-dasharray="2 1.3"/>
<rect x="1545.5" y="495.5" width="4" height="5" fill="#bcbcbc"/>
<circle cx="1547.5" cy="530.5" r="9.6" fill="#9c9c9c" stroke="#888" stroke-width="1.4"/>
<circle cx="1547.5" cy="530.5" r="8.6" fill="none" stroke="#e8e8e8" stroke-width="1.6"/>
<circle cx="1547.5" cy="530.5" r="7" fill="#a4a4a4"/>
<path d="M1555 538.0L1557.5 540.5" stroke="#222" stroke-width="2.6" stroke-linecap="round"/><path d="M1555.3 538.3L1557 540.0" stroke="#999" stroke-width="0.8"/>
<rect x="1541.5" y="525" width="7" height="6" fill="#f4f4f4"/><circle cx="1550.5" cy="532.5" r="3.3" fill="#f4f4f4"/>
<circle cx="1547.5" cy="563" r="9.6" fill="#9c9c9c" stroke="#888" stroke-width="1.4"/>
<circle cx="1547.5" cy="563" r="8.6" fill="none" stroke="#e8e8e8" stroke-width="1.6"/>
<circle cx="1547.5" cy="563" r="7" fill="#a4a4a4"/>
<path d="M1555 570.5L1557.5 573" stroke="#222" stroke-width="2.6" stroke-linecap="round"/><path d="M1555.3 570.8L1557 572.5" stroke="#999" stroke-width="0.8"/>
<path d="M1543 557.5H1549L1552 560.5V568H1543Z" fill="#f6f6f6"/><path d="M1549 557.5V560.5H1552Z" fill="#ccc"/>
</g>
<!-- group / lock / unlock -->
<g>
<path d="M1538.5 605V597.5H1550" fill="none" stroke="#8a8a8a" stroke-width="2.2"/>
<rect x="1543" y="601" width="16" height="16" fill="#8c8c8c" stroke="#a8a8a8" stroke-width="1.3"/>
<path d="M1538.5 637V629.5H1550" fill="none" stroke="#8a8a8a" stroke-width="2.2"/>
<rect x="1543" y="633" width="16" height="16" fill="#777" stroke="#a8a8a8" stroke-width="1.3"/>
<path d="M1546.5 641V638.5Q1546.5 635.5 1551 635.5Q1555.5 635.5 1555.5 638.5V641" fill="none" stroke="#eee" stroke-width="1.6"/>
<rect x="1545" y="641" width="12" height="7" fill="url(#gpage)"/>
<path d="M1538.5 669V661.5H1550" fill="none" stroke="#8a8a8a" stroke-width="2.2"/>
<rect x="1543" y="665" width="16" height="16" fill="#777" stroke="#a8a8a8" stroke-width="1.3"/>
<path d="M1550.5 673V670Q1550.5 667.5 1554 667.5Q1557.5 667.5 1557.5 670V673" fill="none" stroke="#eee" stroke-width="1.5"/>
<rect x="1542" y="673" width="11" height="9" fill="url(#gpage)" stroke="#999" stroke-width="0.6"/>
</g>
<!-- object icons -->
<g fill="#555"><rect x="1537" y="704" width="2.5" height="2.5"/><rect x="1558" y="704" width="2.5" height="2.5"/><rect x="1537" y="725" width="2.5" height="2.5"/><rect x="1558" y="725" width="2.5" height="2.5"/>
<rect x="1546" y="736" width="2.5" height="2.5"/><rect x="1558" y="736" width="2.5" height="2.5"/><rect x="1537" y="742" width="2.5" height="2.5"/><rect x="1558" y="748" width="2.5" height="2.5"/><rect x="1537" y="756" width="2.5" height="2.5"/><rect x="1553" y="756" width="2.5" height="2.5"/></g>
<rect x="1541" y="712.5" width="11" height="10.5" fill="#e6e6e6" stroke="#fafafa" stroke-width="1"/>
<circle cx="1553" cy="710" r="5.5" fill="#e4e4e4" stroke="#f6f6f6" stroke-width="1.2"/>
<rect x="1541" y="744.5" width="11" height="10.5" fill="#e6e6e6" stroke="#fafafa" stroke-width="1"/>
<rect x="1543.5" y="746.5" width="4" height="4" fill="#333"/>
<circle cx="1552.5" cy="742.5" r="5" fill="#999" stroke="#bbb" stroke-width="1"/>
<path d="M1546 777V786.5L1551.5 781.75Z" fill="#c8c8c8"/>

<!-- ===== snap bar ===== -->
<rect x="1568" y="85.5" width="31" height="30" fill="#545454"/>
<rect x="1568" y="85.5" width="31" height="1.5" fill="#050505"/><rect x="1568" y="85.5" width="1.5" height="30" fill="#050505"/>
<rect x="1598" y="86" width="1" height="29.5" fill="#6a6a6a"/><rect x="1569" y="115" width="30" height="1" fill="#6a6a6a"/>
<path d="M1576.5 89.5L1580.8 93.8L1576.5 98.1L1572.2 93.8Z" fill="#a8a8a8" stroke="#f4f4f4" stroke-width="1.2"/>
<path d="M1589 102.5L1592.8 106.3L1589 110.1L1585.2 106.3Z" fill="#888" stroke="#eee" stroke-width="0.9"/>
<path d="M1581 97.5L1584.5 101M1584.5 98V101H1581.5" fill="none" stroke="#bbb" stroke-width="0.9"/>
<!-- bbox corner -->
<path d="M1577.7 132V145" stroke="#7a7a7a" stroke-width="1.4" stroke-dasharray="2 1.5"/>
<path d="M1583.5 149.3H1596" stroke="#7a7a7a" stroke-width="1.4" stroke-dasharray="2 1.5"/>
<path d="M1577.7 144.3L1582.7 149.3L1577.7 154.3L1572.7 149.3Z" fill="#d4d4d4" stroke="#f6f6f6" stroke-width="1.1"/>
<path d="M1577.7 164.5V180.5M1578 180.9H1596" fill="none" stroke="#bdbdbd" stroke-width="1.1" stroke-dasharray="1.2 1.8"/>
<path d="M1577.7 195.5V208M1583 212.6H1596" fill="none" stroke="#bdbdbd" stroke-width="1.1" stroke-dasharray="1.2 1.8"/>
<path d="M1577.7 208L1582.3 212.6L1577.7 217.2L1573.1 212.6Z" fill="url(#hatch)"/>
<path d="M1577.7 228V231.5M1578 244.8H1596" fill="none" stroke="#bdbdbd" stroke-width="1.1" stroke-dasharray="1.2 1.8"/>
<path d="M1577.7 232L1581.3 235.7L1577.7 239.4L1574.1 235.7Z" fill="url(#hatch)"/>
<path d="M1577.7 242.5L1580 244.8L1577.7 247.1L1575.4 244.8Z" fill="none" stroke="#bbb" stroke-width="0.7"/>
<path d="M1577.7 260V274M1580 276.5H1596" fill="none" stroke="#bdbdbd" stroke-width="1.1" stroke-dasharray="1.2 1.8"/>
<path d="M1577.7 274.2L1580 276.5L1577.7 278.8L1575.4 276.5Z" fill="none" stroke="#bbb" stroke-width="0.7"/>
<circle cx="1591" cy="263.7" r="3.5" fill="url(#hatch)"/>
<!-- node snap selected -->
<rect x="1568" y="301" width="31" height="30" fill="#545454"/>
<rect x="1568" y="301" width="31" height="1.5" fill="#050505"/><rect x="1568" y="301" width="1.5" height="30" fill="#050505"/>
<rect x="1598" y="302" width="1" height="29" fill="#6a6a6a"/><rect x="1569" y="330.5" width="30" height="1" fill="#6a6a6a"/>
<path d="M1573 306.5L1576.5 310M1576.5 307V310H1573.5" fill="none" stroke="#ccc" stroke-width="0.9"/>
<path d="M1585 317.5L1592 310.5" stroke="#ccc" stroke-width="1"/>
<path d="M1582.5 315.5L1587 320L1582.5 324.5L1578 320Z" fill="#f4f4f4" stroke="#fff" stroke-width="0.6"/>
<path d="M1573 338L1576.5 341.5M1576.5 338.5V341.5H1573.5" fill="none" stroke="#ccc" stroke-width="0.9"/>
<path d="M1574.5 356Q1578 348 1584 348Q1590 347 1592 340" fill="none" stroke="#bdbdbd" stroke-width="1.4"/>
<!-- X hatched -->
<path d="M1573.5 368L1592.5 387M1592.5 368L1573.5 387" stroke="url(#hatch)" stroke-width="3.5"/>
<path d="M1573.5 368L1592.5 387M1592.5 368L1573.5 387" stroke="#d8d8d8" stroke-width="1.5" opacity="0.6"/>
<!-- intersection V -->
<path d="M1574 405.5L1583 414.5L1592 405.5" fill="none" stroke="#bdbdbd" stroke-width="1.1"/>
<path d="M1583 409.5L1587.5 414L1583 418.5L1578.5 414Z" fill="#aaa" stroke="#ddd" stroke-width="0.7"/>
<!-- curve with square -->
<path d="M1574.5 435Q1576 441 1580 442M1586 445Q1591 446 1592.5 451" fill="none" stroke="#bdbdbd" stroke-width="1.3"/>
<rect x="1579.5" y="439.5" width="6.5" height="6.5" fill="#888" stroke="#ddd" stroke-width="1"/>
<!-- squares joined -->
<rect x="1586.5" y="464.5" width="6" height="6" fill="#aaa" stroke="#ddd" stroke-width="1.3"/>
<rect x="1572.5" y="480.5" width="6" height="6" fill="#aaa" stroke="#ddd" stroke-width="1.3"/>
<circle cx="1583" cy="476" r="1.6" fill="none" stroke="#ccc" stroke-width="0.9"/>
<path d="M1578.5 480.5L1581.8 477.2M1584.2 474.8L1586.5 472" stroke="#ccc" stroke-width="0.9"/>
<!-- L gear -->
<path d="M1577.5 496V513.5H1595" fill="none" stroke="#8a8a8a" stroke-width="0.9"/>
<circle cx="1591" cy="499.5" r="2.2" fill="none" stroke="#ccc" stroke-width="1.1"/>
<!-- center snaps -->
<path d="M1577.5 527V544M1577.5 545H1595" stroke="#8a8a8a" stroke-width="1" stroke-dasharray="1.5 1.5"/>
<path d="M1589 527V536M1584.5 531.5H1593.5" stroke="#888" stroke-width="2"/>
<!-- page -->
<path d="M1574.5 573.5H1584.5L1590.5 579.5V593.5Q1590.5 594.5 1589.5 594.5H1575.5Q1574.5 594.5 1574.5 593.5Z" fill="url(#gpage)"/>
<path d="M1584.5 573.5V579.5H1590.5Z" fill="#cfcfcf"/>
<!-- grid selected -->
<rect x="1568" y="601" width="31" height="30" fill="#545454"/>
<rect x="1568" y="601" width="31" height="1.5" fill="#050505"/><rect x="1568" y="601" width="1.5" height="30" fill="#050505"/>
<rect x="1569" y="630.5" width="30" height="1" fill="#6a6a6a"/>
<path d="M1572 605.5H1595M1572 610.5H1595M1572 615.5H1595M1572 620.5H1595M1572 625.5H1595M1574.5 603V628M1580 603V628M1585.5 603V628M1591 603V628" stroke="#aaaaaa" stroke-width="1.2"/>
<!-- guide selected -->
<rect x="1568" y="633" width="31" height="30.5" fill="#545454"/>
<rect x="1568" y="633" width="31" height="1.5" fill="#050505"/><rect x="1568" y="633" width="1.5" height="30.5" fill="#050505"/>
<rect x="1569" y="663" width="30" height="1" fill="#6a6a6a"/>
<path d="M1577.5 636V659M1571 652H1595" stroke="#6a6a6a" stroke-width="1" stroke-dasharray="1.5 1.5"/>
<rect x="1581" y="637.5" width="14" height="13.5" fill="#e8e8e8"/><rect x="1583" y="639.5" width="10" height="9.5" fill="#b8b8b8"/>
<!-- palette arrow -->
<path d="M1595 797V804.5L1590.5 800.75Z" fill="#c8c8c8"/>
</g>

<rect x="17" y="796" width="16" height="16" fill="#000000"/><rect x="33" y="796" width="16" height="16" fill="#1a1a1a"/><rect x="49" y="796" width="16" height="16" fill="#333333"/><rect x="65" y="796" width="16" height="16" fill="#4d4d4d"/><rect x="81" y="796" width="16" height="16" fill="#666666"/><rect x="97" y="796" width="16" height="16" fill="#808080"/><rect x="113" y="796" width="16" height="16" fill="#999999"/><rect x="129" y="796" width="16" height="16" fill="#b3b3b3"/><rect x="145" y="796" width="16" height="16" fill="#cccccc"/><rect x="161" y="796" width="16" height="16" fill="#e6e6e6"/><rect x="177" y="796" width="16" height="16" fill="#ececec"/><rect x="193" y="796" width="16" height="16" fill="#f2f2f2"/><rect x="209" y="796" width="16" height="16" fill="#f9f9f9"/><rect x="225" y="796" width="16" height="16" fill="#ffffff"/><rect x="241" y="796" width="16" height="16" fill="#800000"/><rect x="257" y="796" width="16" height="16" fill="#ff0000"/><rect x="273" y="796" width="16" height="16" fill="#808000"/><rect x="289" y="796" width="16" height="16" fill="#ffff00"/><rect x="305" y="796" width="16" height="16" fill="#008000"/><rect x="321" y="796" width="16" height="16" fill="#00ff00"/><rect x="337" y="796" width="16" height="16" fill="#008080"/><rect x="353" y="796" width="16" height="16" fill="#00ffff"/><rect x="369" y="796" width="16" height="16" fill="#000080"/><rect x="385" y="796" width="16" height="16" fill="#0000ff"/><rect x="401" y="796" width="16" height="16" fill="#800080"/><rect x="417" y="796" width="16" height="16" fill="#ff00ff"/><rect x="433" y="796" width="16" height="16" fill="#2b0000"/><rect x="449" y="796" width="16" height="16" fill="#550000"/><rect x="465" y="796" width="16" height="16" fill="#800000"/><rect x="481" y="796" width="16" height="16" fill="#aa0000"/><rect x="497" y="796" width="16" height="16" fill="#d40000"/><rect x="513" y="796" width="16" height="16" fill="#ff0000"/><rect x="529" y="796" width="16" height="16" fill="#ff2a2a"/><rect x="545" y="796" width="16" height="16" fill="#ff5555"/><rect x="561" y="796" width="16" height="16" fill="#ff8080"/><rect x="577" y="796" width="16" height="16" fill="#ffaaaa"/><rect x="593" y="796" width="16" height="16" fill="#ffd5d5"/><rect x="609" y="796" width="16" height="16" fill="#280b0b"/><rect x="625" y="796" width="16" height="16" fill="#501616"/><rect x="641" y="796" width="16" height="16" fill="#782121"/><rect x="657" y="796" width="16" height="16" fill="#a02c2c"/><rect x="673" y="796" width="16" height="16" fill="#c83737"/><rect x="689" y="796" width="16" height="16" fill="#d35f5f"/><rect x="705" y="796" width="16" height="16" fill="#de8787"/><rect x="721" y="796" width="16" height="16" fill="#e9afaf"/><rect x="737" y="796" width="16" height="16" fill="#f4d7d7"/><rect x="753" y="796" width="16" height="16" fill="#241c1c"/><rect x="769" y="796" width="16" height="16" fill="#483737"/><rect x="785" y="796" width="16" height="16" fill="#6c5353"/><rect x="801" y="796" width="16" height="16" fill="#916f6f"/><rect x="817" y="796" width="16" height="16" fill="#ac9393"/><rect x="833" y="796" width="16" height="16" fill="#c8b7b7"/><rect x="849" y="796" width="16" height="16" fill="#e3dbdb"/><rect x="865" y="796" width="16" height="16" fill="#2b1100"/><rect x="881" y="796" width="16" height="16" fill="#552200"/><rect x="897" y="796" width="16" height="16" fill="#803300"/><rect x="913" y="796" width="16" height="16" fill="#aa4400"/><rect x="929" y="796" width="16" height="16" fill="#d45500"/><rect x="945" y="796" width="16" height="16" fill="#ff6600"/><rect x="961" y="796" width="16" height="16" fill="#ff7f2a"/><rect x="977" y="796" width="16" height="16" fill="#ff9955"/><rect x="993" y="796" width="16" height="16" fill="#ffb380"/><rect x="1009" y="796" width="16" height="16" fill="#ffccaa"/><rect x="1025" y="796" width="16" height="16" fill="#ffe6d5"/><rect x="1041" y="796" width="16" height="16" fill="#28170b"/><rect x="1057" y="796" width="16" height="16" fill="#502d16"/><rect x="1073" y="796" width="16" height="16" fill="#784421"/><rect x="1089" y="796" width="16" height="16" fill="#a05a2c"/><rect x="1105" y="796" width="16" height="16" fill="#c87137"/><rect x="1121" y="796" width="16" height="16" fill="#d38d5f"/><rect x="1137" y="796" width="16" height="16" fill="#deaa87"/><rect x="1153" y="796" width="16" height="16" fill="#e9c6af"/><rect x="1169" y="796" width="16" height="16" fill="#f4e3d7"/><rect x="1185" y="796" width="16" height="16" fill="#241f1c"/><rect x="1201" y="796" width="16" height="16" fill="#483e37"/><rect x="1217" y="796" width="16" height="16" fill="#6c5d53"/><rect x="1233" y="796" width="16" height="16" fill="#917c6f"/><rect x="1249" y="796" width="16" height="16" fill="#ac9d93"/><rect x="1265" y="796" width="16" height="16" fill="#c8beb7"/><rect x="1281" y="796" width="16" height="16" fill="#e3dedb"/><rect x="1297" y="796" width="16" height="16" fill="#2b2200"/><rect x="1313" y="796" width="16" height="16" fill="#554400"/><rect x="1329" y="796" width="16" height="16" fill="#806600"/><rect x="1345" y="796" width="16" height="16" fill="#aa8800"/><rect x="1361" y="796" width="16" height="16" fill="#d4aa00"/><rect x="1377" y="796" width="16" height="16" fill="#ffcc00"/><rect x="1393" y="796" width="16" height="16" fill="#ffd42a"/><rect x="1409" y="796" width="16" height="16" fill="#ffdd55"/><rect x="1425" y="796" width="16" height="16" fill="#ffe680"/><rect x="1441" y="796" width="16" height="16" fill="#ffeeaa"/><rect x="1457" y="796" width="16" height="16" fill="#fff6d5"/><rect x="1473" y="796" width="16" height="16" fill="#28220b"/><rect x="1489" y="796" width="16" height="16" fill="#504416"/><rect x="1505" y="796" width="16" height="16" fill="#786721"/><rect x="1521" y="796" width="16" height="16" fill="#a0892c"/><rect x="1537" y="796" width="16" height="16" fill="#c8ab37"/><rect x="1553" y="796" width="16" height="16" fill="#d3bc5f"/><rect x="1569" y="796" width="18" height="16" fill="#decd87"/><rect x="1" y="796" width="16" height="16" fill="#fff"/><path d="M2 797L16 811M16 797L2 811" stroke="#8a1010" stroke-width="1.9"/>
<g id="status">
<!-- palette scrollbar -->
<rect x="1" y="818.5" width="10.5" height="11" fill="#3e3e3e" stroke="#2e2e2e" stroke-width="0.8"/>
<path d="M8 821.5V827L4.5 824.25Z" fill="#d8d8d8"/>
<rect x="370" y="819" width="1206" height="10.5" fill="#555555"/>
<rect x="370" y="829" width="1206" height="1" fill="#6a6a6a"/>
<rect x="12" y="818" width="358" height="11.5" fill="#484848"/>
<rect x="12" y="818" width="358" height="1" fill="#5e5e5e"/>
<rect x="12" y="829" width="358" height="1" fill="#2e2e2e"/><rect x="369" y="818" width="1" height="12" fill="#2e2e2e"/>
<rect x="1577" y="818.5" width="10" height="11" fill="#3e3e3e" stroke="#2e2e2e" stroke-width="0.8"/>
<path d="M1580.5 821.5V827L1584 824.25Z" fill="#d8d8d8"/>
<!-- fill/stroke -->
<g font-size="11" fill="#c8c8c8">
<text x="2" y="842.8" textLength="14" lengthAdjust="spacingAndGlyphs">Fill:</text>
<text x="2" y="856.8" textLength="34" lengthAdjust="spacingAndGlyphs">Stroke:</text>
</g>
<rect x="40" y="832" width="83" height="13.5" fill="#9a9a9a"/>
<rect x="40" y="846" width="59" height="14" fill="#000"/>
<text x="102" y="857" font-size="11.5" fill="#c8d0dc" textLength="21" lengthAdjust="spacingAndGlyphs">83.3</text>
<text x="127.5" y="850" font-size="11.5" fill="#c8c8c8">O:</text>
<rect x="140.5" y="836.5" width="28.5" height="19" fill="#5a5a5a" stroke="#333" stroke-width="0.6"/>
<rect x="169" y="836.5" width="8.5" height="19" fill="#0e0e0e"/>
<rect x="170.3" y="838" width="6" height="7.5" fill="#3e3e3e"/><rect x="170.3" y="846.5" width="6" height="7.5" fill="#3e3e3e"/>
<path d="M171.3 843H175.3L173.3 841Z" fill="#bbb"/><path d="M171.3 849H175.3L173.3 851Z" fill="#bbb"/>
<text x="143" y="850" font-size="11.5" fill="#f0f0f0" textLength="20" lengthAdjust="spacingAndGlyphs">100</text>
<rect x="180.5" y="832" width="1" height="27" fill="#2a2a2a"/>
<!-- eye -->
<path d="M185.5 846.5Q191 840.5 196.5 846.5Q191 851 185.5 846.5Z" fill="#d0d0d0"/>
<circle cx="191" cy="846" r="2" fill="#444"/>
<!-- lock -->
<path d="M204.5 843V841.5Q204.5 839.5 207 839.5Q209.5 839.5 209.5 841.5" fill="none" stroke="#d0d0d0" stroke-width="1.3"/>
<rect x="207" y="843" width="7" height="6.5" rx="0.8" fill="#d8d8d8"/>
<!-- layer combo -->
<rect x="218" y="832" width="68" height="26.5" rx="1" fill="#474747" stroke="#262626" stroke-width="1"/>
<rect x="218.5" y="832.5" width="67" height="1" fill="#565656"/>
<rect x="224" y="844" width="2.2" height="2.2" fill="#f0f0f0"/>
<text x="227" y="850" font-size="11" fill="#f0f0f0" font-weight="bold" textLength="33" lengthAdjust="spacingAndGlyphs">Layer 1</text>
<rect x="268.5" y="836" width="1" height="19" fill="#2c2c2c"/>
<path d="M271 842H281L276 847.5Z" fill="#d0d0d0"/>
<rect x="286.5" y="832" width="1" height="27" fill="#2a2a2a"/>
<!-- message -->
<text x="292" y="850" font-size="11" fill="#d4d4d4"><tspan font-weight="bold" textLength="53" lengthAdjust="spacingAndGlyphs">Rectangle</tspan><tspan> in layer </tspan><tspan font-weight="bold">Layer 1</tspan><tspan>. Click selection to toggle scale/rotation handles.</tspan></text>
<!-- coords -->
<rect x="1431" y="832" width="1" height="27" fill="#262626"/>
<g font-size="11" fill="#c8d0dc">
<text x="1433.5" y="842.8" textLength="9" lengthAdjust="spacingAndGlyphs">X:</text>
<text x="1433.5" y="856.8" textLength="9" lengthAdjust="spacingAndGlyphs">Y:</text>
</g>
<g font-size="11.3" fill="#c8d0dc" style="font-family:'Liberation Mono',monospace">
<text x="1447" y="842.8" textLength="55" lengthAdjust="spacingAndGlyphs" style="font-family:'Liberation Mono',monospace">22967.71</text>
<text x="1447" y="856.8" textLength="55" lengthAdjust="spacingAndGlyphs" style="font-family:'Liberation Mono',monospace">-2483.71</text>
</g>
<text x="1511.5" y="850" font-size="11.5" fill="#c8c8c8">Z:</text>
<rect x="1525" y="837" width="46" height="18.5" fill="#5a5a5a" stroke="#333" stroke-width="0.6"/>
<rect x="1571" y="837" width="9" height="18.5" fill="#0e0e0e"/>
<rect x="1572.5" y="838.5" width="6" height="7.3" fill="#3e3e3e"/><rect x="1572.5" y="846.8" width="6" height="7.3" fill="#3e3e3e"/>
<path d="M1573.5 843.5H1577.5L1575.5 841.5Z" fill="#bbb"/><path d="M1573.5 849H1577.5L1575.5 851Z" fill="#bbb"/>
<text x="1533" y="850.5" font-size="11.5" fill="#e8eef6" textLength="22" lengthAdjust="spacingAndGlyphs">45%</text>
<!-- grip -->
<path d="M1583 860L1600 843M1588 860L1600 848M1593 860L1600 853" stroke="#555" stroke-width="1"/>
<path d="M1584 860L1600 844M1589 860L1600 849M1594 860L1600 854" stroke="#2a2a2a" stroke-width="0.8"/>
</g>

<defs>
<linearGradient id="tbact" x1="0" y1="0" x2="1" y2="1"><stop offset="0" stop-color="#6a6a6a"/><stop offset="0.45" stop-color="#3a3a3a"/><stop offset="0.55" stop-color="#2a2a2a"/><stop offset="1" stop-color="#3a3a3a"/></linearGradient>
<linearGradient id="tbact2" x1="0" y1="0" x2="1" y2="1"><stop offset="0" stop-color="#e0e0e0"/><stop offset="0.5" stop-color="#b0b0b0"/><stop offset="0.55" stop-color="#989898"/><stop offset="1" stop-color="#b0b0b0"/></linearGradient>
<radialGradient id="ieg" cx="0.45" cy="0.4" r="0.7"><stop offset="0" stop-color="#a8ecff"/><stop offset="0.6" stop-color="#3ab8f0"/><stop offset="1" stop-color="#1a78c8"/></radialGradient>
<linearGradient id="fold" x1="0" y1="0" x2="0" y2="1"><stop offset="0" stop-color="#fff0b8"/><stop offset="1" stop-color="#e8c870"/></linearGradient>
<linearGradient id="cdr" x1="0" y1="0" x2="1" y2="0"><stop offset="0" stop-color="#5aa020"/><stop offset="0.5" stop-color="#a8d858"/><stop offset="1" stop-color="#4a8a18"/></linearGradient>
<radialGradient id="ffg" cx="0.4" cy="0.3" r="0.75"><stop offset="0" stop-color="#a8e0f8"/><stop offset="0.5" stop-color="#3a8ad8"/><stop offset="1" stop-color="#1a3a8a"/></radialGradient>
</defs>
<g id="taskbar">
<!-- library/apps icon -->
<path d="M30 882.5L35.5 868L48 872.5L42.5 887Z" fill="#98d890" stroke="#c0eab0" stroke-width="0.7"/>
<rect x="37" y="873.5" width="11.5" height="16" fill="#a8d0f8" stroke="#d0e8ff" stroke-width="0.7"/>
<path d="M41 876.5L56.5 871L61.5 886.5L46 892Z" fill="#f8dc70" stroke="#fff2b0" stroke-width="0.7"/>
<!-- IE -->
<path d="M96 879.5Q96 866.5 109 866.5Q122.5 866.5 122.5 880.5V882H104.5Q105.5 887.5 110 887.5Q114 887.5 115.5 884.5H122Q119.5 893 109.5 893Q96 893 96 879.5ZM104.5 876.5H114.5Q113.5 872 109.5 872Q105.5 872 104.5 876.5Z" fill="url(#ieg)" fill-rule="evenodd"/>
<path d="M95.5 892.5Q91 889 98 878Q106 867 118 864.5Q124 864 122 871" fill="none" stroke="#f2c21a" stroke-width="2.4" stroke-linecap="round"/>
<!-- explorer active -->
<rect x="141.5" y="861.5" width="57.5" height="38" fill="url(#tbact)" stroke="#b4b4b4" stroke-width="1"/>
<path d="M154 868H162L164 870H184V894H154Z" fill="#e8c060"/>
<rect x="156" y="867" width="10" height="3" fill="#fff"/><rect x="157" y="867.5" width="2.5" height="2" fill="#10a020"/>
<rect x="166" y="869" width="10" height="3" fill="#fff"/><rect x="167" y="869.5" width="2.5" height="2" fill="#d02020"/>
<rect x="173" y="871" width="9" height="3" fill="#fff"/><rect x="174" y="871.5" width="2.5" height="2" fill="#2080e0"/>
<path d="M153.5 875H185V894H153.5Z" fill="url(#fold)"/>
<path d="M158 896V885Q158 883 160 883H178Q180 883 180 885V896H175.5V889H162.5V896Z" fill="#8ac8f0" stroke="#4a98d0" stroke-width="0.8"/>
<!-- CorelDRAW -->
<path d="M217.5 875Q217.5 864 232 864Q246.5 864 246.5 875Q246.5 884 236 894Q232 897.5 228 894Q217.5 884 217.5 875Z" fill="url(#cdr)"/>
<path d="M224 866Q228 880 232 895M232 864.5Q236 880 239 891M240 865Q242 876 244 880" fill="none" stroke="#3e7a10" stroke-width="1" opacity="0.6"/>
<path d="M220.5 869.5L225 865.5L239.5 880L240 886L234 884Z" fill="#fff" stroke="#2a5a08" stroke-width="0.7"/>
<!-- Chrome -->
<circle cx="294" cy="880" r="14" fill="#e03a2a"/>
<path d="M294 880L281.9 873A14 14 0 0 0 287 892.1Z" fill="#30a040"/>
<path d="M294 880L287 892.1A14 14 0 0 0 307.9 878.6Z" fill="#f0c020"/>
<path d="M294 880L307.9 878.6A14 14 0 0 0 306.1 873L294 873Z" fill="#f0c020"/>
<circle cx="294" cy="880" r="6.2" fill="#fff"/><circle cx="294" cy="880" r="4.8" fill="#3a80d8"/>
<!-- Firefox active -->
<rect x="327.5" y="861.5" width="57" height="38" fill="url(#tbact)" stroke="#b4b4b4" stroke-width="1"/>
<circle cx="357" cy="879" r="15" fill="#f07a18"/>
<circle cx="358.5" cy="876.5" r="11" fill="url(#ffg)"/>
<path d="M342 879Q342 868 347 864.5L349 869Q352 867.5 354 869.5L350.5 873Q354 875 352.5 878Q351 883 357 884Q360 885 358.5 887Q352 889 348 885Q343 881 342 879Z" fill="#e8600e"/>
<path d="M342 879Q343 892 357 894.5Q368 894 371.5 884Q372.5 876 368.5 869.5Q370 878 365 884Q359 891 350 887Q344 884 342 879Z" fill="#e05a10"/>
<path d="M368.5 869.5Q373 875 371.5 884Q369 880 367 876Z" fill="#f8b020"/>
<path d="M352 890Q360 893 366 888" fill="none" stroke="#f89a20" stroke-width="1.2"/>
<!-- Inkscape active -->
<rect x="389.5" y="861.5" width="57" height="38" fill="url(#tbact2)" stroke="#e8e8e8" stroke-width="1"/>
<defs><linearGradient id="inkg" x1="0" y1="0" x2="1" y2="0.6"><stop offset="0" stop-color="#ffffff"/><stop offset="0.45" stop-color="#b8c4d0"/><stop offset="1" stop-color="#2a5a98"/></linearGradient></defs>
<path d="M417.4 865L432 879.7L417.4 881.5L402.8 879.7Z" fill="#0a0a0a"/>
<path d="M417.4 867.3L429.3 879.2L417.4 880L405.5 879.2Z" fill="url(#inkg)"/>
<path d="M414.5 877.5L416.5 873.5L418 877L421.5 876.5L424.5 880.5L422 884L425.5 887L423 890L420.5 893.5L416.5 893L416 890L412 888.5L410.5 885.5L414 883L411 880Z" fill="#0a0a0a"/>
<path d="M419 884L424 881L423 888L420 891Z" fill="#2c4c7a"/>
<path d="M410.5 885L415.5 884.5L413.5 886.5Z" fill="#666"/>
<rect x="408" y="889.5" width="2.5" height="1.8" fill="#111"/><rect x="426" y="888" width="2.5" height="2" fill="#111"/><rect x="429.5" y="886.5" width="2" height="2" fill="#111"/>
<!-- tray -->
<path d="M1386 884H1394L1390 880Z" fill="#e8e8e8"/>
<rect x="1408" y="874" width="1" height="14" fill="#f0f0f0"/>
<path d="M1409 874.5H1414L1416 876H1421L1418.5 879L1421 882H1414L1412 880.5H1409Z" fill="#f0f0f0"/>
<circle cx="1434.5" cy="875" r="1.8" fill="none" stroke="#eee" stroke-width="1"/>
<path d="M1434.5 877V887M1433 887H1436" stroke="#eee" stroke-width="1"/>
<rect x="1437.5" y="875.5" width="8.5" height="7" fill="none" stroke="#eee" stroke-width="1"/>
<path d="M1441.75 882.5V885.5M1439 886H1444" stroke="#eee" stroke-width="1"/>
<path d="M1456 878.5H1458.5L1462 875V887L1458.5 883.5H1456Z" fill="#eee"/>
<path d="M1464 878Q1465.5 881 1464 884M1466.5 876.5Q1469 881 1466.5 885.5" fill="none" stroke="#ddd" stroke-width="0.9"/>
<text x="1485.5" y="884.5" font-size="12" fill="#f0f0f0" textLength="21.5" lengthAdjust="spacingAndGlyphs">ENG</text>
<text x="1529.5" y="876.5" font-size="12" fill="#f0f0f0" textLength="41" lengthAdjust="spacingAndGlyphs">5:20 PM</text>
<text x="1521.5" y="893.5" font-size="12" fill="#f0f0f0" textLength="57" lengthAdjust="spacingAndGlyphs">12/28/2012</text>
</g>

</svg>
</body></html>
